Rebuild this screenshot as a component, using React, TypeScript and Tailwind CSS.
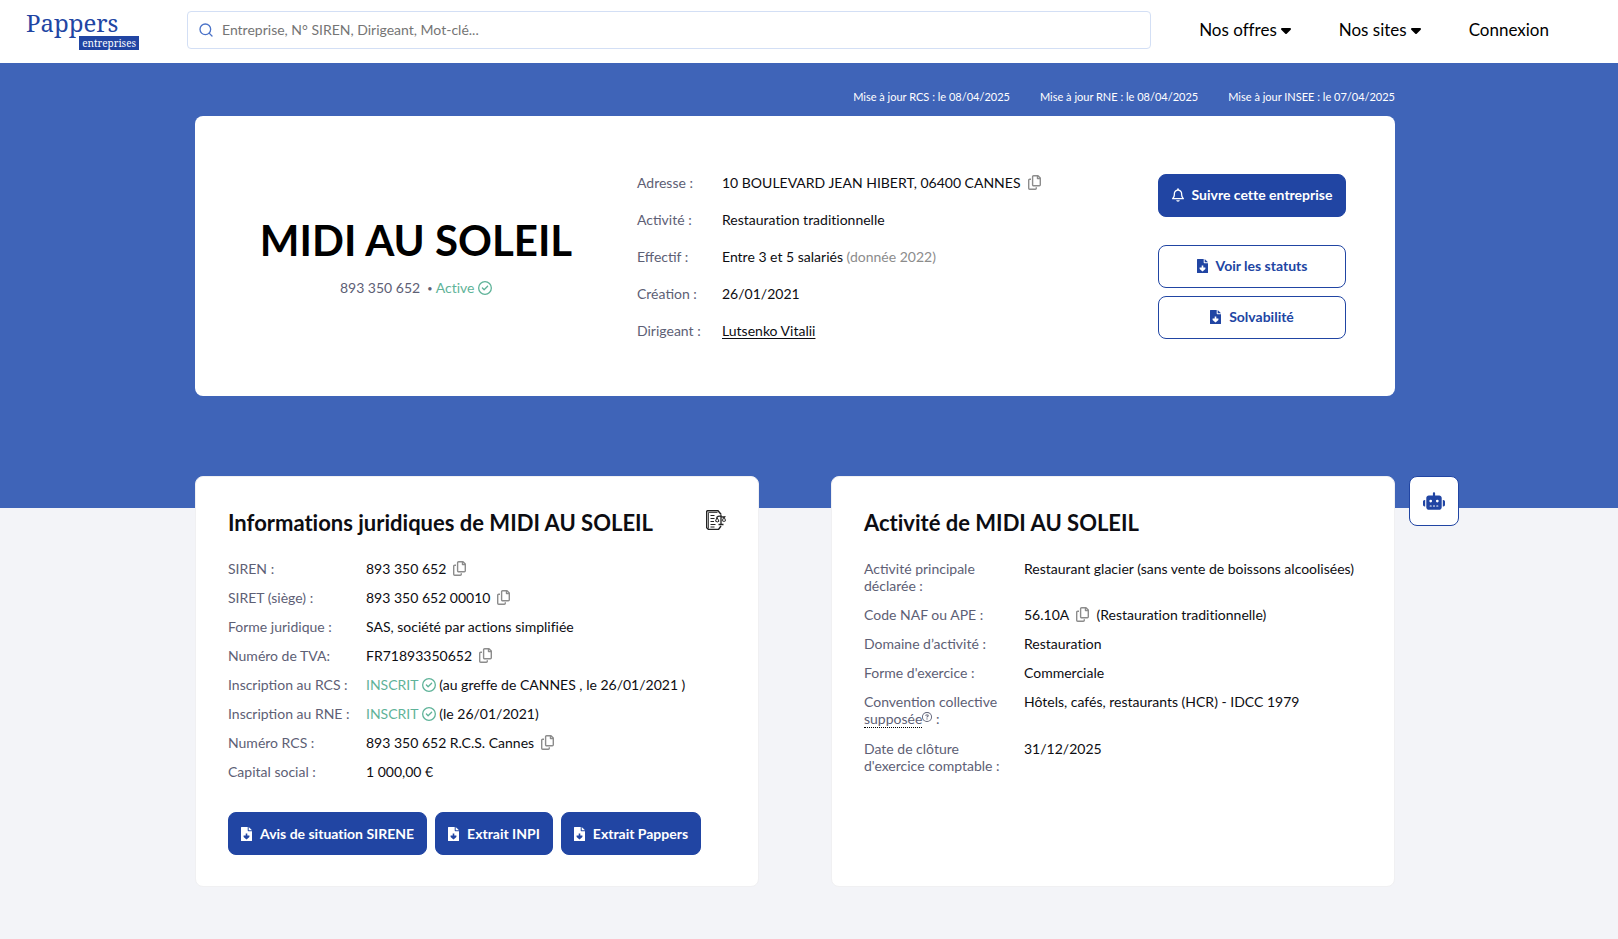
import type { ReactNode } from "react";
import { FaCaretDown, FaRegBell, FaRegCircleCheck, FaRegCircleQuestion, FaRobot } from "react-icons/fa6";
import { FiSearch } from "react-icons/fi";

const UPDATES = [
  "Mise à jour RCS : le 08/04/2025",
  "Mise à jour RNE : le 08/04/2025",
  "Mise à jour INSEE : le 07/04/2025",
];

type Row = { label: ReactNode; value: ReactNode };

const SUMMARY: Row[] = [
  { label: "Adresse :", value: <>10 BOULEVARD JEAN HIBERT, 06400 CANNES<CopyButton /></> },
  { label: "Activité :", value: "Restauration traditionnelle" },
  {
    label: "Effectif :",
    value: <>Entre 3 et 5 salariés <span className="text-[#8c8c8c]">(donnée 2022)</span></>,
  },
  { label: "Création :", value: "26/01/2021" },
  { label: "Dirigeant :", value: <a href="#dirigeant" className="underline underline-offset-2">Lutsenko Vitalii</a> },
];

const LEGAL: Row[] = [
  { label: "SIREN :", value: <>893 350 652<CopyButton /></> },
  { label: "SIRET (siège) :", value: <>893 350 652 00010<CopyButton /></> },
  { label: "Forme juridique :", value: "SAS, société par actions simplifiée" },
  { label: "Numéro de TVA:", value: <>FR71893350652<CopyButton /></> },
  { label: "Inscription au RCS :", value: <><Status>INSCRIT</Status> (au greffe de CANNES , le 26/01/2021 )</> },
  { label: "Inscription au RNE :", value: <><Status>INSCRIT</Status> (le 26/01/2021)</> },
  { label: "Numéro RCS :", value: <>893 350 652 R.C.S. Cannes<CopyButton /></> },
  { label: "Capital social :", value: "1 000,00 €" },
];

const ACTIVITY: Row[] = [
  { label: "Activité principale déclarée :", value: "Restaurant glacier (sans vente de boissons alcoolisées)" },
  { label: "Code NAF ou APE :", value: <>56.10A<CopyButton />&nbsp; (Restauration traditionnelle)</> },
  { label: "Domaine d’activité :", value: "Restauration" },
  { label: "Forme d'exercice :", value: "Commerciale" },
  {
    label: (
      <>
        Convention collective{" "}
        <span className="border-b border-dotted border-black">supposée</span>
        <FaRegCircleQuestion className="mb-1.5 inline size-[10px]" /> :
      </>
    ),
    value: "Hôtels, cafés, restaurants (HCR) - IDCC 1979",
  },
  { label: "Date de clôture d'exercice comptable :", value: "31/12/2025" },
];

function CopyButton() {
  return (
    <button type="button" aria-label="Copier" className="ml-[7px] inline-block pt-px align-top text-[#8c8c8c]">
      <svg viewBox="0 0 13 15" className="h-[15px] w-[13px]" fill="none" stroke="currentColor" strokeWidth="1.4" strokeLinejoin="round">
        <path d="M5.600.700h4.400l2.300 2.300v6.700a1 1 0 0 1-1 1H5.600a1 1 0 0 1-1-1V1.700a1 1 0 0 1 1-1zM9.500.900v2.700h2.600" />
        <path d="M3 4.200H1.700a1 1 0 0 0-1 1v8.100a1 1 0 0 0 1 1h5.600a1 1 0 0 0 1-1v-1" />
      </svg>
    </button>
  );
}

function Status({ children }: { children: ReactNode }) {
  return (
    <span className="text-[#5fb399]">
      {children} <FaRegCircleCheck className="inline size-[14px] align-[-2px]" />
    </span>
  );
}

function BellIcon() {
  return <FaRegBell className="h-[14px] w-3 shrink-0" />;
}

function FileIcon() {
  return (
    <svg viewBox="0 0 11 14" className="h-[14px] w-[11px] shrink-0" fill="currentColor">
      <path
        fillRule="evenodd"
        d="M.5 0H6.700v3.600q0 .7.700.7H11v9.200q0 .5-.5.5H.5q-.5 0-.5-.5V.5Q0 0 .5 0zM4.700 6.500v2H2.600v1.400l2.900 2.700 2.900-2.700V8.500H6.300v-2z"
      />
      <path d="M7.700 0 11 3.300H7.700z" />
    </svg>
  );
}

function Button({ icon, outline, children }: { icon: ReactNode; outline?: boolean; children: ReactNode }) {
  return (
    <button
      type="button"
      className={[
        "flex h-[43px] items-center justify-center gap-2 rounded-lg border border-[#2145a3] px-3 text-sm font-bold whitespace-nowrap",
        outline ? "bg-white text-[#2145a3]" : "bg-[#2145a3] text-white",
      ].join(" ")}
    >
      {icon}
      {children}
    </button>
  );
}

function Rows({ rows, grid }: { rows: Row[]; grid: string }) {
  return (
    <dl className={`grid text-sm leading-[17px] ${grid}`}>
      {rows.map((row, i) => (
        <div key={i} className="contents">
          <dt className="text-[#5d6075] [font-variant-ligatures:normal]">{row.label}</dt>
          <dd className="text-[#0d0d12]">{row.value}</dd>
        </div>
      ))}
    </dl>
  );
}

function Card({ title, icon, children }: { title: string; icon?: ReactNode; children: ReactNode }) {
  return (
    <section className="rounded-lg border border-[#f0f0f2] bg-white p-8 pb-[31px]">
      <div className="mb-[23px] flex items-start justify-between">
        <h2 className="text-[22px] leading-7 font-bold text-[#0d0d12]">{title}</h2>
        {icon}
      </div>
      {children}
    </section>
  );
}

// page with lines and a pair of scales on its right edge
function LegalIcon() {
  return (
    <svg viewBox="0 0 20 20" className="mt-px size-5" fill="none" stroke="#222">
      <path d="M.7.7v17l1.800 1.800h10l2.500-3.500M.7.700h11.300l3 3.500" strokeWidth="1.400" />
      <path d="M2.500 2.500v16M2.500 2.500h9" strokeWidth=".8" />
      <path d="M4.500 5.500h4M4.500 8.500h4M4.500 11.500h3.500M4.500 14.500h5M4.500 17h4" />
      <path d="M15 4.500v10M12.500 14.500h5M10.500 7.500q2.500-2 4.500-1t4.500 0" strokeWidth="1.300" />
      <path d="M9.500 11.200l1.500-3.700 2 3.700q-1.700 1.500-3.500 0M16.200 10.700l1.800-3.700 1.700 3.700q-1.700 1.500-3.500 0" />
    </svg>
  );
}

function Logo() {
  return (
    <a href="#accueil" className="flex w-[113px] flex-col font-['Noto_Serif','DejaVu_Serif',serif] text-[#2145a3]">
      <span className="text-2xl leading-[26px]">Pappers</span>
      <span className="self-end bg-[#2145a3] px-[3px] text-[10px] leading-[14px] text-white">entreprises</span>
    </a>
  );
}

function MenuButton({ children }: { children: ReactNode }) {
  return (
    <button type="button" className="flex items-center gap-1">
      {children}
      <FaCaretDown className="h-4 w-[10px]" />
    </button>
  );
}

export default function App() {
  return (
    <div className="min-h-screen bg-[#f3f4f8] font-[Lato,sans-serif] text-black [font-variant-ligatures:none]">
      <header className="flex h-[63px] items-center bg-white pr-[69px] pb-1 pl-[26px]">
        <Logo />
        <label className="ml-12 flex h-[38px] flex-1 items-center gap-2 rounded border border-[#d3dff5] px-[10px]">
          <FiSearch className="size-4 text-[#4a72c8]" />
          <input
            type="search"
            aria-label="Rechercher une entreprise"
            placeholder="Entreprise, N° SIREN, Dirigeant, Mot-clé..."
            className="flex-1 text-sm outline-none placeholder:text-[#757575]"
          />
        </label>
        <nav className="ml-12 flex items-center gap-12 text-[17px]">
          <MenuButton>Nos offres</MenuButton>
          <MenuButton>Nos sites</MenuButton>
          <a href="#connexion">Connexion</a>
        </nav>
      </header>

      <main className="bg-[linear-gradient(#3f64b8_445px,transparent_445px)] pt-[25px] pr-7 pb-13">
        <div className="mx-auto max-w-[1200px]">
          <div className="mb-[11px] flex justify-end gap-[30px] text-[11px] leading-[17px] text-white">
            {UPDATES.map((u) => <span key={u}>{u}</span>)}
          </div>

          <section className="flex min-h-[280px] items-center rounded-lg bg-white pr-[49px]">
            <div className="w-[442px] text-center">
              <h1 className="text-[42px] leading-[52px] font-bold">MIDI AU SOLEIL</h1>
              <p className="mt-3 text-sm text-[#5d6075]">
                893 350 652 &nbsp;<span className="align-[1px] text-[9px]">•</span> <Status>Active</Status>
              </p>
            </div>
            <div className="flex-1">
              <Rows rows={SUMMARY} grid="grid-cols-[85px_1fr] gap-y-5" />
            </div>
            <div className="flex w-[188px] flex-col gap-2">
              <Button icon={<BellIcon />}>Suivre cette entreprise</Button>
              <div className="mt-5 flex flex-col gap-2">
                <Button outline icon={<FileIcon />}>Voir les statuts</Button>
                <Button outline icon={<FileIcon />}>Solvabilité</Button>
              </div>
            </div>
          </section>

          <div className="relative mt-20 grid grid-cols-2 gap-[72px]">
            <Card title="Informations juridiques de MIDI AU SOLEIL" icon={<LegalIcon />}>
              <Rows rows={LEGAL} grid="grid-cols-[138px_1fr] gap-y-3" />
              <div className="mt-8 flex gap-2">
                <Button icon={<FileIcon />}>Avis de situation SIRENE</Button>
                <Button icon={<FileIcon />}>Extrait INPI</Button>
                <Button icon={<FileIcon />}>Extrait Pappers</Button>
              </div>
            </Card>
            <Card title="Activité de MIDI AU SOLEIL">
              <Rows rows={ACTIVITY} grid="grid-cols-[140px_1fr] content-start gap-x-5 gap-y-3" />
            </Card>
            <button
              type="button"
              aria-label="Assistant"
              className="absolute top-0 left-full ml-[14px] flex size-[50px] items-center justify-center rounded-lg border border-[#2145a3] bg-white text-[#2145a3]"
            >
              <FaRobot className="size-[22px]" />
            </button>
          </div>
        </div>
      </main>
    </div>
  );
}
